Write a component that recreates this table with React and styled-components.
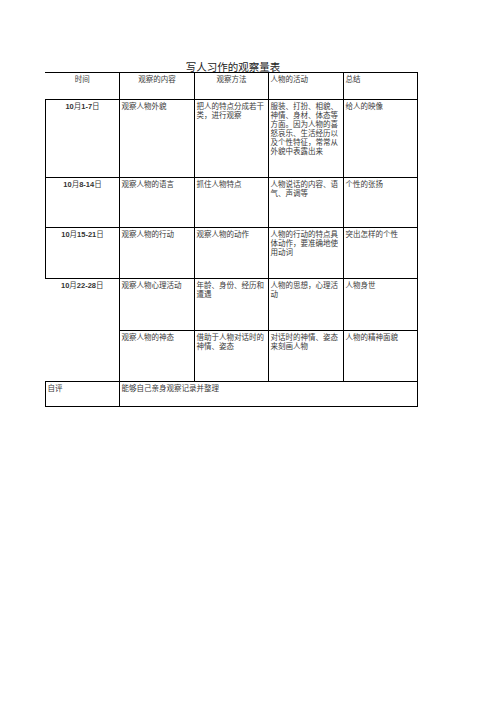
import React from 'react';
import styled, { createGlobalStyle } from 'styled-components';

const rows = [
  {
    date: ['10', '1-7'],
    height: 78,
    cells: [
      '观察人物外貌',
      '把人的特点分成若干类，进行观察',
      '服装、打扮、相貌、神情、身材、体态等方面。因为人物的喜怒哀乐、生活经历以及个性特征，常常从外貌中表露出来',
      '给人的映像',
    ],
  },
  {
    date: ['10', '8-14'],
    height: 50,
    cells: ['观察人物的语言', '抓住人物特点', '人物说话的内容、语气、声调等', '个性的张扬'],
  },
  {
    date: ['10', '15-21'],
    height: 51,
    cells: ['观察人物的行动', '观察人物的动作', '人物的行动的特点具体动作，要准确地使用动词', '突出怎样的个性'],
  },
  {
    date: ['10', '22-28'],
    height: 52,
    span: 2,
    cells: ['观察人物心理活动', '年龄、身份、经历和遭遇', '人物的思想，心理活动', '人物身世'],
  },
  {
    height: 51,
    cells: ['观察人物的神态', '借助于人物对话时的神情、姿态', '对话时的神情、姿态来刻画人物', '人物的精神面貌'],
  },
];

const App = () => {
  return (
    <Page>
      <GlobalStyle />
      <Sheet>
        <Title>写人习作的观察量表</Title>
        <Table>
          <colgroup>
            <col style={{ width: 74 }} />
            <col style={{ width: 75 }} />
            <col style={{ width: 74 }} />
            <col style={{ width: 75 }} />
            <col style={{ width: 74 }} />
          </colgroup>
          <tbody>
            <Row $h={27}>
              <Cell $center $noLeft>时间</Cell>
              <Cell $center>观察的内容</Cell>
              <Cell $center>观察方法</Cell>
              <Cell>人物的活动</Cell>
              <Cell>总结</Cell>
            </Row>
            {rows.map((r, i) => (
              <Row key={i} $h={r.height}>
                {r.date && (
                  <Cell $center rowSpan={r.span || 1} $noLeft={r.span > 1}>
                    <Num>{r.date[0]}</Num>月<Num>{r.date[1]}</Num>日
                  </Cell>
                )}
                {r.cells.map((c, j) => (
                  <Cell key={j}>{c}</Cell>
                ))}
              </Row>
            ))}
            <Row $h={25}>
              <Cell>自评</Cell>
              <Cell colSpan={4}>能够自己亲身观察记录并整理</Cell>
            </Row>
          </tbody>
        </Table>
      </Sheet>
    </Page>
  );
};

export default App;

const GlobalStyle = createGlobalStyle`
  html, body {
    margin: 0;
    padding: 0;
    background: #fff;
  }
  body {
    font-family: "Noto Sans CJK SC", "Liberation Serif", serif;
  }
`;

const Page = styled.div`
  width: 496px;
  height: 702px;
  background: #fff;
  padding: 61px 0 0 45px;
  box-sizing: border-box;
`;

const Sheet = styled.div`
  width: 372px;
  display: flex;
  flex-direction: column;
  align-items: center;
`;

const Title = styled.div`
  font-size: 10.5px;
  line-height: 11px;
  color: #222;
  padding-left: 4px;
`;

const Table = styled.table`
  width: 372px;
  border-collapse: collapse;
  table-layout: fixed;
`;

const Row = styled.tr`
  height: ${(p) => p.$h}px;
`;

const Cell = styled.td`
  border: 1px solid #000;
  border-left: ${(p) => (p.$noLeft ? 'none' : '1px solid #000')};
  vertical-align: top;
  text-align: ${(p) => (p.$center ? 'center' : 'left')};
  padding: 1px 1px 0 2px;
  font-size: 7.5px;
  line-height: 9px;
  color: #3a3a3a;
  word-break: break-all;
`;

const Num = styled.span`
  font-family: "Liberation Sans", sans-serif;
  font-weight: bold;
  color: #333;
`;
